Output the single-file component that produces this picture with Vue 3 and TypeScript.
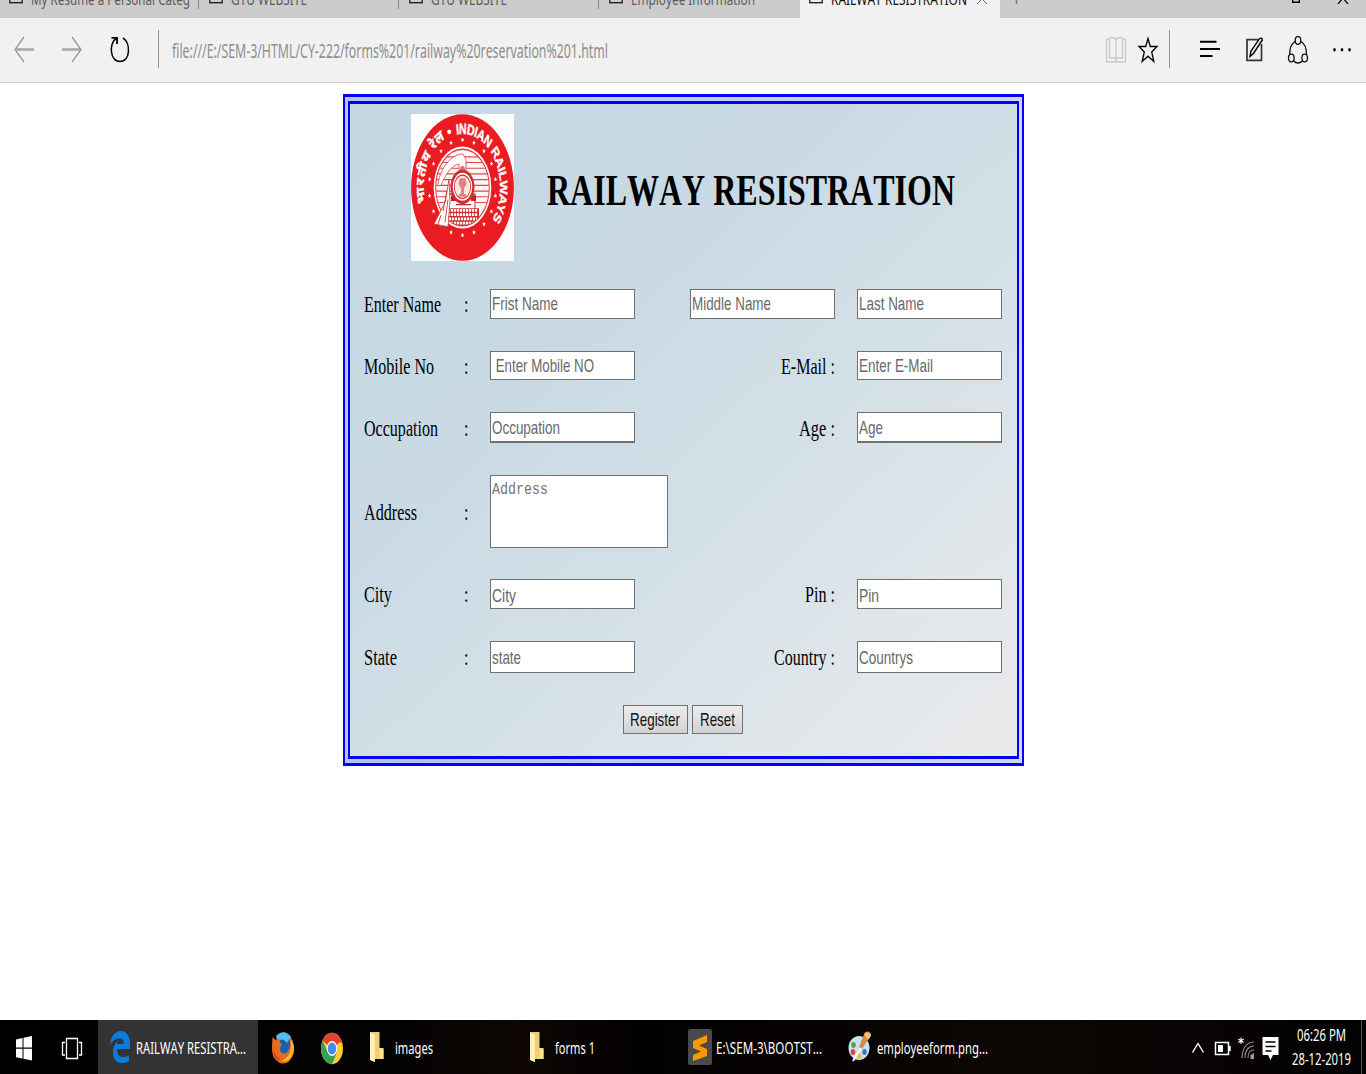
<script setup lang="ts">
interface Cell { text: string; w: number }
interface Row {
  top: number
  h: number
  label: Cell
  first: Cell
  middle?: Cell
  side?: Cell
  last?: Cell
  area?: boolean
  nudge?: number
  thick?: boolean
}

/* Condenses a text run to a given width while keeping its place in the flow. */
const vFit = {
  mounted(el: HTMLElement, binding: { value: number }) {
    const natural = el.getBoundingClientRect().width
    const tall = Number(el.dataset.tall ?? 1.4)
    el.style.transform = `scale(${binding.value / natural}, ${tall})`
    el.style.marginRight = `${binding.value - natural}px`
  },
}

const tabs = [
  { text: 'My Resume a Personal Categ', w: 159 },
  { text: 'GTU WEBSITE', w: 76 },
  { text: 'GTU WEBSITE', w: 76 },
  { text: 'Employee Information', w: 124 },
  { text: 'RAILWAY RESISTRATION', w: 136, active: true },
]

const rows: Row[] = [
  { top: 28, h: 30, label: { text: 'Enter Name', w: 77 }, first: { text: 'Frist Name', w: 66 }, middle: { text: 'Middle Name', w: 79 }, last: { text: 'Last Name', w: 65 } },
  { top: 32, h: 29, label: { text: 'Mobile No', w: 70 }, first: { text: '\u00a0Enter Mobile NO', w: 102 }, side: { text: 'E-Mail :', w: 54 }, last: { text: 'Enter E-Mail', w: 74 } },
  { top: 32, h: 31, label: { text: 'Occupation', w: 74 }, first: { text: 'Occupation', w: 68 }, side: { text: 'Age :', w: 36 }, last: { text: 'Age', w: 24 }, thick: true },
  { top: 32, h: 73, label: { text: 'Address', w: 53 }, first: { text: 'Address', w: 56 }, area: true },
  { top: 31, h: 30, label: { text: 'City', w: 28 }, first: { text: 'City', w: 24 }, side: { text: 'Pin :', w: 30 }, last: { text: 'Pin', w: 20 }, nudge: 3 },
  { top: 32, h: 32, label: { text: 'State', w: 33 }, first: { text: 'state', w: 29 }, side: { text: 'Country :', w: 61 }, last: { text: 'Countrys', w: 54 }, nudge: 1 },
]

const stars = Array.from({ length: 18 }, (_, i) => {
  const a = (i * 20 - 90) * Math.PI / 180
  return { x: 51.5 + 33.4 * Math.cos(a), y: 51.5 + 33.4 * Math.sin(a) }
})
const slats = [30, 34, 38, 42, 46, 50, 54, 58, 62]
</script>

<template>
  <div class="screen">
    <div class="tabs">
      <div v-for="(t, i) in tabs" :key="i" class="tab" :class="{ active: t.active }">
        <svg class="page" width="14" height="4"><path d="M.8 0V2.600H13.200V0" fill="none" stroke="#333" stroke-width="1.400" /><path d="M0 2.600H14" stroke="#222" stroke-width="1.200" /></svg>
        <span v-fit="t.w" class="ui tabtext">{{ t.text }}</span>
        <svg v-if="t.active" class="close" width="12" height="4"><path d="M1 4 6 -1 11 4" fill="none" stroke="#666" /></svg>
      </div>
      <svg class="plus" width="3" height="4"><path d="M1.500 0V4" stroke="#777" stroke-width="1.500" /></svg>
      <svg class="max" width="8" height="3"><path d="M.7 0V2.200H7.300V0" fill="none" stroke="#000" stroke-width="1.400" /></svg>
      <svg class="quit" width="12" height="4"><path d="M1 4 6 -2 11 4" fill="none" stroke="#000" stroke-width="1.200" /></svg>
    </div>

    <div class="nav">
      <svg class="left-icons" width="158" height="64" fill="none">
        <path d="M24 19 15 31.500 24 44" stroke="#999" stroke-width="1.300" />
        <path d="M15 31.500H34" stroke="#aaa" stroke-width="2.600" />
        <path d="M62 31.500H81" stroke="#aaa" stroke-width="2.600" />
        <path d="M72 19 81 31.500 72 44" stroke="#999" stroke-width="1.300" />
        <path d="M116 20.500C109 25 109.500 43.500 120 43.500C130.500 43.500 131 25 123 20" stroke="#000" stroke-width="1.500" />
        <path d="M111.500 19.800H117V26" stroke="#000" stroke-width="1.800" />
      </svg>
      <i class="rule"></i>
      <span v-fit="436" class="ui url">file:///E:/SEM-3/HTML/CY-222/forms%201/railway%20reservation%201.html</span>
      <svg class="right-icons" width="266" height="64" fill="none">
        <g stroke="#c8c8c8" stroke-width="1.300">
          <path d="M9 21.500H6.500V44H25.500V21.500H23M16 22V44M9.500 40V19.700H14L16 22 18 19.700H22.500V40H9.500" />
        </g>
        <path d="M48 20.500 50.300 28.500H57L51.700 34 53.800 43.500 48 38.200 42.200 43.500 44.300 34 39 28.500H45.700Z" stroke="#000" stroke-width="1.300" />
        <path d="M69.500 12V50" stroke="#999" />
        <path d="M100 23.700H116.500M100 31H120M100 38H112.500" stroke="#000" stroke-width="2" />
        <path d="M158 21.700H147V42.300H161.500V26" stroke="#333" stroke-width="1.700" />
        <path d="M150 38.500 151 33 159.500 20.700Q162 19 162.300 22L153.500 35.500Z" stroke="#000" stroke-width="1.400" />
        <g stroke="#111" stroke-width="1.300">
          <ellipse cx="198" cy="22.500" rx="2.800" ry="3.800" />
          <ellipse cx="191.300" cy="40" rx="2.800" ry="3.800" />
          <ellipse cx="204.700" cy="40" rx="2.800" ry="3.800" />
          <path d="M195 23.500C191 26 189.700 31 189.700 36M201 23.500C205 26 206.500 31 206.500 36M193.500 43Q198 47 202.500 43" />
        </g>
        <g fill="#000"><ellipse cx="234.500" cy="31.800" rx="1.300" ry="1.800" /><ellipse cx="242" cy="31.800" rx="1.300" ry="1.800" /><ellipse cx="249.500" cy="31.800" rx="1.300" ry="1.800" /></g>
      </svg>
    </div>

    <main>
      <div class="frame">
        <form class="inner" @submit.prevent>
          <header>
            <svg class="logo" width="103" height="147" viewBox="0 0 103 147">
              <rect width="103" height="147" fill="#fdfdfd" />
              <g transform="scale(1 1.427)">
                <defs>
                  <path id="arcR" d="M45.500 14.500A37.500 37.500 0 0 1 71 83.600" />
                  <path id="arcL" d="M14.500 62.500A38.500 38.500 0 0 1 37 15.800" />
                  <clipPath id="disc"><circle cx="51.500" cy="51.500" r="26.500" /></clipPath>
                </defs>
                <circle cx="51.500" cy="51.500" r="51.400" fill="#ea1c22" />
                <text class="ring"><textPath href="#arcR" textLength="89">INDIAN RAILWAYS</textPath></text>
                <text class="hindi"><textPath href="#arcL" textLength="53">भारतीय रेल</textPath></text>
                <ellipse cx="38.200" cy="12.500" rx="2" ry="1.700" fill="#fff" />
                <g fill="#fff"><path v-for="(s, i) in stars" :key="i" :transform="`translate(${s.x} ${s.y})`" d="M0-1.700.6-.5 1.800-.4.8.4 1.100 1.500 0 .9-1.100 1.500-.8.400-1.800-.4-.6-.5Z" /></g>
                <circle cx="51.500" cy="51.500" r="28.800" fill="#fff" />
                <circle cx="51.500" cy="51.500" r="26.800" fill="#fff6f5" stroke="#dc3a3d" stroke-width="1" />
                <g clip-path="url(#disc)">
                  <path v-for="y in slats" :key="y" :d="`M24 ${y}H79`" stroke="#d8494b" stroke-width=".8" />
                  <path d="M27 49C30 36 42 28 52 28L55 32V40H48V35C40 36 35 42 30 50" fill="#fff" stroke="#d8494b" stroke-width=".7" />
                  <path d="M38 70V56H64V70Z" fill="#fff" stroke="#d22b30" stroke-width="1" />
                  <path d="M36 66H68V78H36Z" fill="#d22b30" />
                  <path d="M37 67.500H67M37 70.500H67M38 73.500H66M40 76.500H64" stroke="#fff" stroke-width="1.900" stroke-dasharray="2.200 .8" />
                  <path d="M40 57H45V61H40ZM60 57H65V61H60Z" fill="#c22127" />
                  <path d="M45 63.500H60" stroke="#c22127" stroke-width="1" />
                  <circle cx="51.500" cy="39" r="2.500" fill="#d96a6a" />
                </g>
                <circle cx="51.500" cy="51" r="12" fill="#d22b30" />
                <circle cx="51.500" cy="51" r="9.800" fill="#fff" />
                <circle cx="51.500" cy="51" r="8.200" fill="#fbe6e4" stroke="#d22b30" stroke-width=".8" />
                <path d="M48.500 45H54.500L55.500 49 53 52V56H55V58H48V56H50V52L47.500 49Z" fill="#db8585" />
                <path d="M38 46 34 62 23 77 37 79 39 61Z" fill="#fff" stroke="#cf3a3d" stroke-width=".7" />
                <path d="M36 54 32 68M37 60 34 76M30 71 27 77M24 78.500 38 80" stroke="#d22b30" stroke-width=".8" />
              </g>
            </svg>
            <span v-fit="408" class="title" data-tall="1.4">RAILWAY RESISTRATION</span>
          </header>

          <div v-for="(r, i) in rows" :key="i" class="row" :style="{ marginTop: r.top + 'px', height: r.h + 'px' }">
            <div class="label"><span v-fit="r.label.w" class="serif">{{ r.label.text }}</span></div>
            <div class="colon"><span class="serif raw">:</span></div>
            <div class="box" :class="{ area: r.area, thick: r.thick }">
              <span v-fit="r.first.w" :class="r.area ? 'mono' : 'sans'" :data-tall="r.area ? 1.27 : 1.4" :style="{ top: (r.nudge ?? 0) / 2 + 'px' }">{{ r.first.text }}</span>
            </div>
            <template v-if="r.last">
              <div class="side">
                <div v-if="r.middle" class="box"><span v-fit="r.middle.w" class="sans">{{ r.middle.text }}</span></div>
                <span v-if="r.side" v-fit="r.side.w" class="serif">{{ r.side.text }}</span>
              </div>
              <div class="box" :class="{ thick: r.thick }"><span v-fit="r.last.w" class="sans" :style="{ top: (r.nudge ?? 0) / 2 + 'px' }">{{ r.last.text }}</span></div>
            </template>
          </div>

          <div class="buttons">
            <button type="submit" class="reg"><span v-fit="50" class="sans">Register</span></button>
            <button type="reset" class="res"><span v-fit="35" class="sans">Reset</span></button>
          </div>
        </form>
      </div>
    </main>

    <footer>
      <svg class="start" width="98" height="54">
        <path d="M16 19.500 22.500 18V27.500H16ZM23.500 17.700 32 16V27.500H23.500ZM16 28.800H22.500V38.500L16 37.200ZM23.500 28.800H32V40.500L23.500 38.800Z" fill="#fff" />
        <path d="M66.500 18.500H77.500V38.500H66.500ZM65 22.500H62.500V35H65M79 22.500H81.500V35H79" fill="none" stroke="#fff" stroke-width="1.300" />
      </svg>
      <div class="app">
        <svg width="20" height="32" viewBox="0 0 20 32"><path d="M0 14C1 5 5 0 11 0C17 0 20 6 20 13V18H7C7 24 10 26 13 26C16 26 18 25 19 24V30C17 31.500 14 32 12 32C5 32 3 27 3 21C3 15 6 11 9 9C7.500 10 7 12 7 13H14C14 10 13 7.500 10 7.500C6 7.500 2 10 0 14Z" fill="#0a7cdc" /></svg>
        <span v-fit="110" class="ui task">RAILWAY RESISTRA...</span>
      </div>
      <svg class="browsers" width="112" height="54">
        <ellipse cx="26" cy="26.500" rx="9.500" ry="14" fill="#1c5fae" />
        <path d="M18 16Q26 8 33 17L29 23Q25 17 20 21Z" fill="#52bfe8" />
        <path d="M14.500 17 18 20.500Q20 18 22 20Q21 23 24 24L22 28Q22 35 28 33Q33 30 32 17Q38 25 35.500 34Q31 46 22 43Q13 39 14 26Z" fill="#e66a1f" />
        <path d="M32.500 19Q38 26 34 36Q30 43 23 41Q32 38 33 27Z" fill="#f9b82f" />
        <path d="M14.500 25Q15 36 23 40Q18 40 16 35Z" fill="#c8321f" />
        <g transform="translate(74 28.500) scale(1 1.430)">
          <circle r="11" fill="#f8ce34" />
          <path d="M0 0 -9.500-5.500A11 11 0 0 1 9.500-5.500Z" fill="#e44234" />
          <path d="M-9.500-5.500A11 11 0 0 0 0 11L5 2.500 0 5-4.500 2.500Z" fill="#35a155" />
          <path d="M0-5H10" stroke="#e44234" stroke-width="1.500" />
          <circle r="5.200" fill="#fff" /><circle r="4.200" fill="#4a87ee" />
        </g>
      </svg>
      <div v-for="f in [{ t: 'images', w: 38 }, { t: 'forms 1', w: 40 }]" :key="f.t" class="folder">
        <svg width="15" height="32"><path d="M0 1H9.500V17L13.500 18V28H5V31L0 29Z" fill="#f2cf6b" /><path d="M0 1.500 5 4V31L0 29Z" fill="#fff0b4" /><path d="M9.500 17H13.500V28H9.500Z" fill="#fbe294" /></svg>
        <span v-fit="f.w" class="ui task">{{ f.t }}</span>
      </div>
      <div class="sublime">
        <svg width="24" height="36"><rect width="24" height="36" rx="2" fill="#4a4a4a" /><path d="M5 12 19 6V13L11 16.500 19 20V27L5 32V26L13 22.500 5 19Z" fill="#ff9800" /></svg>
        <span v-fit="106" class="ui task">E:\SEM-3\BOOTST...</span>
      </div>
      <div class="paint">
        <svg width="24" height="34"><ellipse cx="11" cy="18" rx="10.500" ry="12" fill="#c5e2f2" /><path d="M11 17 17 2Q22 0 23 5L14 19Z" fill="#d68c45" /><path d="M16 4Q22 0 23 6L20 10Z" fill="#f2c177" /><ellipse cx="5.500" cy="15" rx="2.300" ry="3" fill="#57a639" /><ellipse cx="5" cy="22" rx="2.300" ry="3" fill="#e34234" /><ellipse cx="11" cy="26" rx="2.500" ry="3" fill="#f1c232" /><ellipse cx="16.500" cy="22" rx="2.200" ry="3" fill="#3573bd" /><path d="M5 31 13 18" stroke="#fff" stroke-width="2" /></svg>
        <span v-fit="111" class="ui task">employeeform.png...</span>
      </div>
      <svg class="tray" width="90" height="54" fill="none">
        <path d="M3.500 32.500 9 23.500 14.500 32.500" stroke="#fff" stroke-width="1.400" />
        <path d="M26.500 22.500H39.500V34.500H26.500ZM41 26V31" stroke="#fff" stroke-width="1.500" /><path d="M29 25H34V32H29Z" fill="#fff" />
        <path d="M52 17.500V24M49.300 19 54.700 22.500M54.700 19 49.300 22.500" stroke="#fff" stroke-width="1.100" />
        <path d="M53 38C53 28 58 22 65 22M56 38C56 30 60 26 65 26M59 38C59 33 61 30 65 30" stroke="#888" stroke-width="1.200" /><path d="M61.500 39V35L65 33V39Z" fill="#999" />
        <path d="M73.500 17H89.500V35H84L81.500 40 79 35H73.500Z" fill="#fff" /><path d="M76.500 22H86.500M76.500 26.500H86.500M76.500 31H82.500" stroke="#000" stroke-width="1.500" />
      </svg>
      <div class="clock">
        <span v-fit="49" class="ui time">06:26 PM</span>
        <span v-fit="59" class="ui time">28-12-2019</span>
      </div>
      <i class="peek"></i>
    </footer>
  </div>
</template>

<style>
body { margin: 0; background: #fff; overflow: hidden; }
</style>

<style scoped>
.screen { width: 1366px; height: 1074px; display: flex; flex-direction: column; background: #fff; overflow: hidden; }
span { display: inline-block; flex: none; white-space: nowrap; transform-origin: 0 50%; position: relative; font-kerning: none; }
.ui { font-family: "Noto Sans", "Open Sans", sans-serif; }
.serif { font: 16px/20px "Liberation Serif", serif; font-kerning: none; color: #000; margin-top: 2px; }
.raw { transform: scaleY(1.4); }
.sans { font: 13.6px/18px "Liberation Sans", sans-serif; font-kerning: none; color: #696969; }
.mono { font: 13px/16px "Liberation Mono", monospace; color: #757575; }

.tabs { height: 18px; flex: none; display: flex; background: #ccc; overflow: hidden; }
.tab { width: 200px; height: 18px; box-sizing: border-box; display: flex; align-items: flex-start; padding-left: 9px; position: relative; flex: none; }
.tab:not(.active)::after { content: ""; position: absolute; right: 1px; top: 0; width: 1px; height: 9px; background: #888; }
.tab:nth-child(4)::after { display: none; }
.tab:nth-child(3)::after { display: block; }
.tab.active { background: #f1f1f1; }
.tabtext { margin-left: 8px; margin-top: -9px; font-size: 12px; line-height: 16px; color: #5c5c5c; }
.active .tabtext { color: #111; }
.close { margin-left: 9px; }
.plus { margin-left: 15px; }
.max { margin-left: 274px; }
.quit { margin-left: 37px; }

.nav { height: 64px; flex: none; display: flex; align-items: center; background: #f1f1f1; border-bottom: 1px solid #ccc; }
.rule { width: 1px; height: 38px; background: #999; margin-top: -2px; }
.url { margin-left: 13px; top: 1px; font-size: 14px; line-height: 20px; color: #8e8e8e; }
.right-icons { margin-left: auto; }

main { flex: 1; display: flex; justify-content: center; align-items: flex-start; padding-top: 11px; }
.frame { margin-left: 1px; box-sizing: border-box; width: 681px; height: 672px; border: solid #00f; border-width: 3px 2px; padding: 4px 3px; background: linear-gradient(90deg, #b5c4ed, #d0d8f4); }
.inner { box-sizing: border-box; width: 671px; height: 658px; border: solid #00f; border-width: 3px 2px; padding: 10px 14px 0; background: linear-gradient(137deg, #c4d7e3 0%, #c9dae4 35%, #d4e0e7 60%, #e0e6ea 80%, #e9eaea 100%); }
header { height: 147px; display: flex; align-items: center; padding-left: 47px; }
.logo { flex: none; }
.title { margin-left: 33px; top: 2px; font: bold 32px/40px "Liberation Serif", serif; font-kerning: none; color: #000; }
.ring { font: bold 10.500px "Liberation Sans", sans-serif; fill: #fff; stroke: #fff; stroke-width: .3px; }
.hindi { font: bold 11px "Noto Sans Devanagari", "Noto Sans", sans-serif; fill: #fff; stroke: #fff; stroke-width: .3px; }

.row { display: flex; align-items: center; }
.label { width: 100px; flex: none; display: flex; }
.colon { width: 26px; flex: none; display: flex; }
.box { width: 145px; height: 100%; flex: none; box-sizing: border-box; border: 1px solid #707070; background: #fff; display: flex; align-items: center; padding-left: 1.4px; }
.box.thick { border-bottom-width: 2px; }
.box.thick .sans { margin-top: 2px; }
.box.area { width: 178px; align-items: flex-start; padding-left: 1px; padding-top: 6px; }
.side { width: 200px; height: 100%; margin-right: 22px; display: flex; justify-content: flex-end; align-items: center; }
.buttons { display: flex; gap: 4px; justify-content: center; margin: 32px 2px 0 0; height: 29px; }
button { box-sizing: border-box; padding: 0; height: 29px; border: 1px solid #707070; background: linear-gradient(#ededed, #d2d2d2); display: flex; align-items: center; justify-content: center; }
button .sans { color: #111; }
.reg { width: 65px; }
.res { width: 51px; }

footer { height: 54px; flex: none; display: flex; align-items: center; background: linear-gradient(90deg, #000 0, #050302 30%, #0d0603 38%, #020101 47%, #0c0603 75%, #030202 100%); }
footer svg, footer div { flex: none; }
.app { box-sizing: border-box; width: 160px; height: 54px; padding-left: 12px; display: flex; align-items: center; background: #333; }
.task { color: #fff; font-size: 12px; line-height: 16px; top: 1px; }
.app .task { margin-left: 6px; }
.folder { width: 160px; display: flex; align-items: center; }
.folder .task { margin-left: 10px; }
.sublime { width: 160px; margin-left: -2px; display: flex; align-items: center; }
.sublime .task { margin-left: 4px; }
.paint { width: 341px; display: flex; align-items: center; }
.paint .task { margin-left: 5px; }
.clock { width: 84px; display: flex; flex-direction: column; align-items: center; }
.time { color: #fff; font-size: 12px; line-height: 24px; }
.peek { width: 1px; height: 54px; background: #555; margin-left: -2px; }
</style>
